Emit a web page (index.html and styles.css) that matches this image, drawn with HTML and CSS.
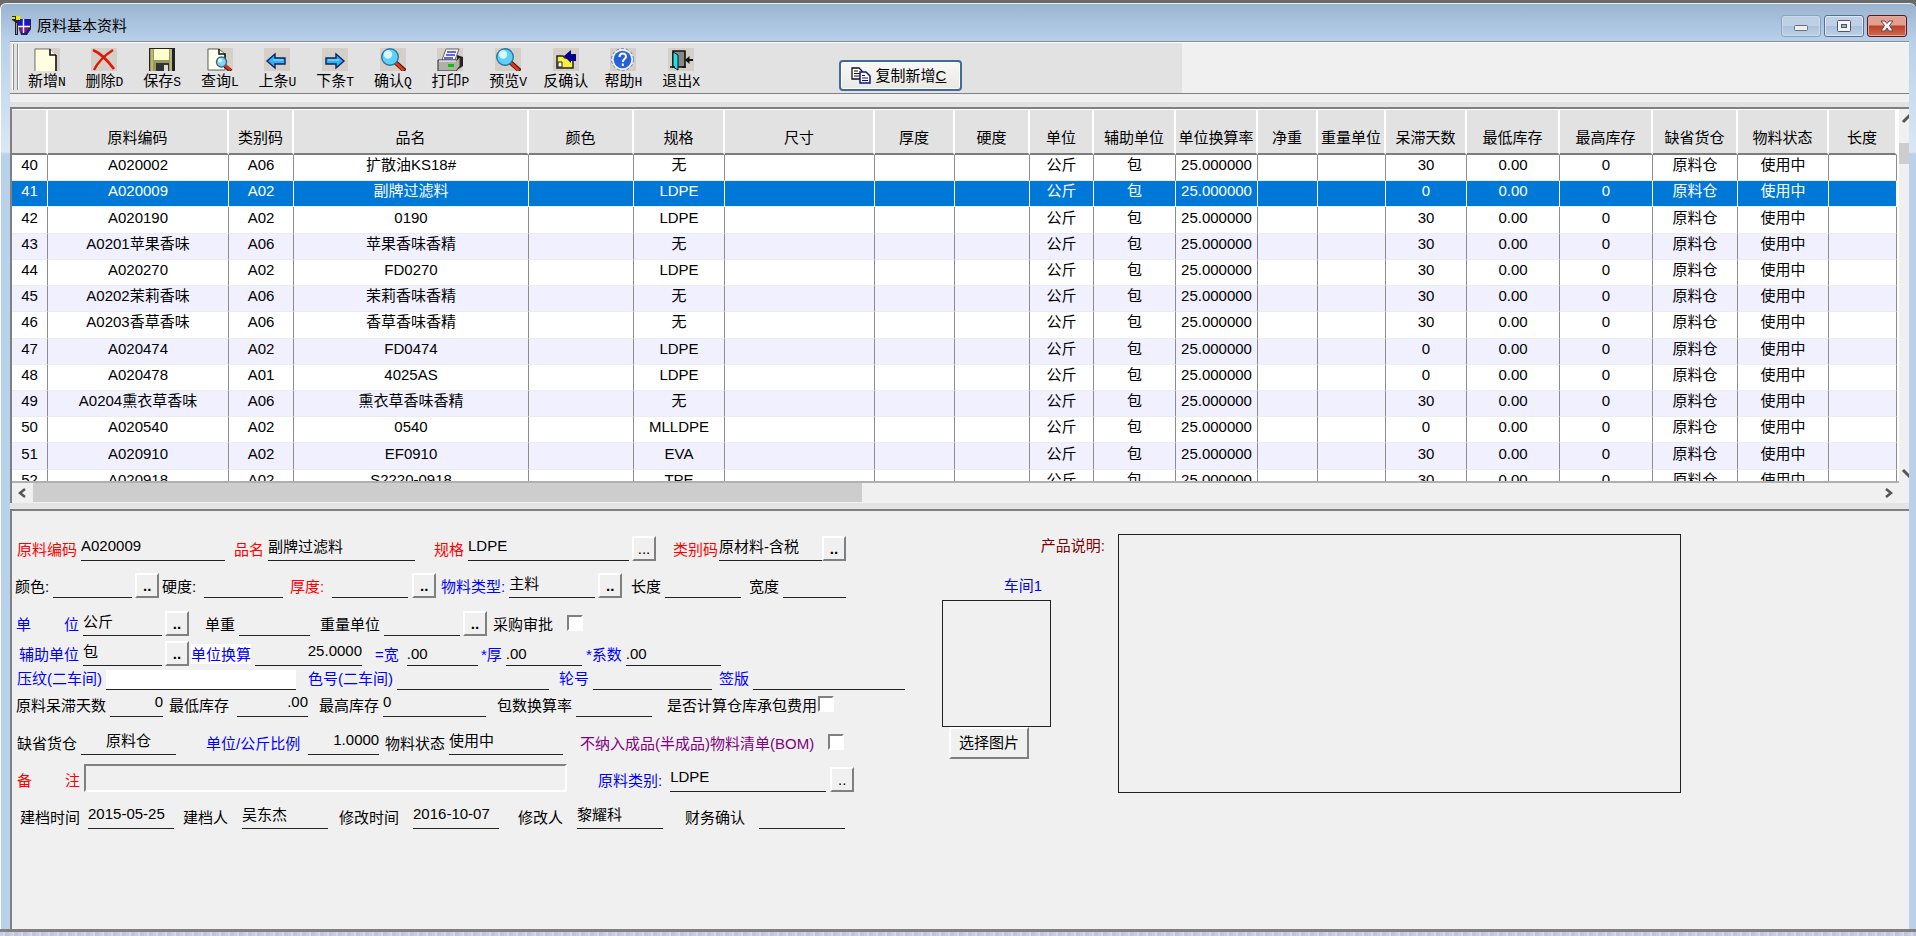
FILE: index.html
```html
<!DOCTYPE html>
<html lang="zh-CN">
<head>
<meta charset="utf-8">
<title>原料基本资料</title>
<link rel="stylesheet" href="styles.css">
</head>
<body>
<div class="window">
<header class="titlebar">
  <svg class="app-icon" viewBox="0 0 20 20" width="20" height="20"><path d="M4 3h15v10l-4 6H9z" fill="#2a1a6a"/><path d="M6 4h5v6H6zM12 4h5v6h-5z" fill="#1414e0"/><path d="M7 11h4v5H8zM12 11h5l-3 5h-2z" fill="#7a1a8a"/><path d="M11.5 3v14M6 10.500h12" stroke="#fff" stroke-width="1.400"/><path d="M0 0h8v4l-2 2v13H3V6L0 4z" fill="#222"/><path d="M0 1h3v2H0zM4 0h4v4H4z" fill="#e8e800"/><path d="M4.500 7v11" stroke="#999"/></svg>
  <h1 class="title">原料基本资料</h1>
  <div class="win-buttons">
    <button class="win-btn" aria-label="最小化"><svg viewBox="0 0 16 14" width="16" height="14"><rect x="1.500" y="6.500" width="13" height="5" rx="1" fill="#eee" stroke="#666f7a"/></svg></button>
    <button class="win-btn win-max" aria-label="最大化"><svg viewBox="0 0 16 14" width="16" height="14"><rect x="1.500" y="1.500" width="13" height="11" rx="1" fill="#f4f4f4" stroke="#4c5664"/><rect x="5.500" y="5.500" width="5" height="3" fill="#8fb0d4" stroke="#4c5664"/></svg></button>
    <button class="win-btn win-close" aria-label="关闭"><svg viewBox="0 0 16 14" width="16" height="14"><path d="M2 2h4l2 2.500L10 2h4l-3.500 4.500L14 12h-4L8 9l-2 3H2l3.500-5.500z" fill="#f4f4f4" stroke="#5a4a58"/></svg></button>
  </div>
</header>
<div class="client">
<nav class="toolbar">
  <div class="tools">
    <div class="grip"></div>
    <div class="tool-list">
      <button class="tool"><svg viewBox="0 0 26 23" width="26" height="23"><rect width="26" height="23" fill="#d4d0c8"/><path d="M1 1h15l6 6v17H1z" fill="#ffffe0" stroke="#777"/><path d="M16 1v6h6" fill="#fff" stroke="#111" stroke-width="1.600"/><path d="M22 7v16" stroke="#111" stroke-width="1.500"/></svg><span>新增<kbd>N</kbd></span></button>
      <button class="tool"><svg viewBox="0 0 26 23" width="26" height="23"><rect width="26" height="23" fill="#d4d0c8"/><path d="M2 2c7 3 15 11 21 19" fill="none" stroke="#e01808" stroke-width="2.800"/><path d="M22 2C14 7 7 14 3 22" fill="none" stroke="#e01808" stroke-width="2.400"/></svg><span>删除<kbd>D</kbd></span></button>
      <button class="tool"><svg viewBox="0 0 26 23" width="26" height="23"><path d="M0 0h26v23H0z" fill="#222"/><path d="M1 1h22v22H1z" fill="#98985c"/><path d="M5 1h15v11H5z" fill="#ffffcc"/><path d="M3 1v22M22 1v22" stroke="#d8d8a0"/><path d="M7 15h13v8H7z" fill="#333"/><path d="M15 17h4v6h-4z" fill="#ddd"/></svg><span>保存<kbd>S</kbd></span></button>
      <button class="tool"><svg viewBox="0 0 26 23" width="26" height="23"><rect width="26" height="23" fill="#d4d0c8"/><path d="M1 1h11l6 5v16H1z" fill="#fffff0" stroke="#666"/><path d="M12 1v5h6v14" fill="none" stroke="#111" stroke-width="1.500"/><circle cx="14.500" cy="14" r="5" fill="#7fd8f8" stroke="#37698c" stroke-width="1.400"/><circle cx="13" cy="12.500" r="2" fill="#e8faff"/><path d="M18 18l6 5" stroke="#222" stroke-width="4"/><path d="M18 17.500l5.500 4.500" stroke="#e83010" stroke-width="2.600"/></svg><span>查询<kbd>L</kbd></span></button>
      <button class="tool"><svg viewBox="0 0 26 23" width="26" height="23"><rect width="26" height="23" fill="#d4d0c8"/><path d="M3 13l8-7v4h10v6H11v4z" fill="#30b0f8" stroke="#102060" stroke-width="1.400"/><path d="M9 12h10" stroke="#a0e8ff"/></svg><span>上条<kbd>U</kbd></span></button>
      <button class="tool"><svg viewBox="0 0 26 23" width="26" height="23"><rect width="26" height="23" fill="#d4d0c8"/><path d="M22 13l-8-7v4H4v6h10v4z" fill="#30b0f8" stroke="#102060" stroke-width="1.400"/><path d="M6 12h11" stroke="#a0e8ff"/></svg><span>下条<kbd>T</kbd></span></button>
      <button class="tool"><svg viewBox="0 0 26 23" width="26" height="23"><rect width="26" height="23" fill="#d4d0c8"/><path d="M15 14l10 9" stroke="#222" stroke-width="4.500"/><path d="M15 14l9 8.500" stroke="#f03010" stroke-width="3"/><circle cx="10" cy="9" r="8.300" fill="#60d0f8" stroke="#2878a8" stroke-width="1.400"/><circle cx="8" cy="6.500" r="4.200" fill="#d8f8ff"/></svg><span>确认<kbd>Q</kbd></span></button>
      <button class="tool"><svg viewBox="0 0 26 23" width="26" height="23"><rect width="26" height="23" fill="#d4d0c8"/><path d="M20 7l6 2v9l-6 4z" fill="#222"/><path d="M9 1h13l-4 11H5z" fill="#f4f4ff" stroke="#666"/><path d="M10 4h9M9 7h9M7 10h9" stroke="#3038e0" stroke-width="1.500"/><path d="M1 12h19l3-3v9l-4 5H1z" fill="#b0b0a8" stroke="#333"/><path d="M2 13h17" stroke="#fff"/><path d="M11 16h6v3h-6z" fill="#10c010"/></svg><span>打印<kbd>P</kbd></span></button>
      <button class="tool"><svg viewBox="0 0 26 23" width="26" height="23"><rect width="26" height="23" fill="#d4d0c8"/><path d="M15 14l10 9" stroke="#222" stroke-width="4.500"/><path d="M15 14l9 8.500" stroke="#f03010" stroke-width="3"/><circle cx="10" cy="9" r="8.300" fill="#60d0f8" stroke="#2878a8" stroke-width="1.400"/><circle cx="8" cy="6.500" r="4.200" fill="#d8f8ff"/></svg><span>预览<kbd>V</kbd></span></button>
      <button class="tool"><svg viewBox="0 0 26 23" width="26" height="23"><rect width="26" height="23" fill="#d4d0c8"/><path d="M4 8h6l2 2h8v10H4z" fill="#f8f040" stroke="#222" stroke-width="1.500"/><path d="M5 14h4v5H5z" fill="#fff" stroke="#222"/><path d="M11 8l7-6v4h5v7h-5v2z" fill="#000090"/></svg><span>反确认</span></button>
      <button class="tool"><svg viewBox="0 0 26 23" width="26" height="23"><rect width="26" height="23" fill="#d4d0c8"/><circle cx="12.500" cy="11.500" r="11" fill="#e8eefc" stroke="#7078b0" stroke-dasharray="3 2"/><circle cx="12.500" cy="11.500" r="8.800" fill="#2860d8"/><path d="M9.500 9c0-4.500 6.500-4.500 6.500-.5 0 2.500-3.200 2.500-3.200 5.500M12.800 15.500v2.500" fill="none" stroke="#fff" stroke-width="2"/></svg><span>帮助<kbd>H</kbd></span></button>
      <button class="tool"><svg viewBox="0 0 26 23" width="26" height="23"><rect width="26" height="23" fill="#d4d0c8"/><path d="M5 3h12v16H5z" fill="#888" stroke="#111" stroke-width="1.600"/><path d="M5 4l5 3v15l-5-3z" fill="#20e0e8" stroke="#111"/><path d="M2 19h5M14 19h4" stroke="#111" stroke-width="1.400"/><path d="M25 12h-6" stroke="#111" stroke-width="2"/><path d="M17 12l4.500-4v8z" fill="#111"/></svg><span>退出<kbd>X</kbd></span></button>
    </div>
    <button class="copy-btn"><svg viewBox="0 0 20 17" width="20" height="17"><path d="M1 1h7l3 3v8H1z" fill="#fff" stroke="#111" stroke-width="1.300"/><path d="M3 4h4M3 6.500h6M3 9h6" stroke="#111"/><path d="M9 5h6l4 4v7H9z" fill="#fff" stroke="#10108c" stroke-width="1.500"/><path d="M11 8.500h3M11 11h6M11 13.500h6" stroke="#10108c"/></svg><span>复制新增<u>C</u></span></button>
  </div>
</nav>
<div class="strip"></div>
<section class="grid-panel">
<div class="grid-view">
<table class="grid">
<colgroup><col class="c-num"><col class="c-code"><col class="c-class"><col class="c-name"><col class="c-color"><col class="c-spec"><col class="c-size"><col class="c-thick"><col class="c-hard"><col class="c-unit"><col class="c-aux"><col class="c-rate"><col class="c-net"><col class="c-wunit"><col class="c-days"><col class="c-min"><col class="c-max"><col class="c-store"><col class="c-state"><col class="c-len"></colgroup>
<thead><tr><th></th><th>原料编码</th><th>类别码</th><th>品名</th><th>颜色</th><th>规格</th><th>尺寸</th><th>厚度</th><th>硬度</th><th>单位</th><th>辅助单位</th><th>单位换算率</th><th>净重</th><th>重量单位</th><th>呆滞天数</th><th>最低库存</th><th>最高库存</th><th>缺省货仓</th><th>物料状态</th><th>长度</th></tr></thead>
<tbody>
<tr><td>40</td><td>A020002</td><td>A06</td><td>扩散油KS18#</td><td></td><td>无</td><td></td><td></td><td></td><td>公斤</td><td>包</td><td>25.000000</td><td></td><td></td><td>30</td><td>0.00</td><td>0</td><td>原料仓</td><td>使用中</td><td></td></tr>
<tr class="selected"><td>41</td><td>A020009</td><td>A02</td><td>副牌过滤料</td><td></td><td>LDPE</td><td></td><td></td><td></td><td>公斤</td><td>包</td><td>25.000000</td><td></td><td></td><td>0</td><td>0.00</td><td>0</td><td>原料仓</td><td>使用中</td><td></td></tr>
<tr><td>42</td><td>A020190</td><td>A02</td><td>0190</td><td></td><td>LDPE</td><td></td><td></td><td></td><td>公斤</td><td>包</td><td>25.000000</td><td></td><td></td><td>30</td><td>0.00</td><td>0</td><td>原料仓</td><td>使用中</td><td></td></tr>
<tr><td>43</td><td>A0201苹果香味</td><td>A06</td><td>苹果香味香精</td><td></td><td>无</td><td></td><td></td><td></td><td>公斤</td><td>包</td><td>25.000000</td><td></td><td></td><td>30</td><td>0.00</td><td>0</td><td>原料仓</td><td>使用中</td><td></td></tr>
<tr><td>44</td><td>A020270</td><td>A02</td><td>FD0270</td><td></td><td>LDPE</td><td></td><td></td><td></td><td>公斤</td><td>包</td><td>25.000000</td><td></td><td></td><td>30</td><td>0.00</td><td>0</td><td>原料仓</td><td>使用中</td><td></td></tr>
<tr><td>45</td><td>A0202茉莉香味</td><td>A06</td><td>茉莉香味香精</td><td></td><td>无</td><td></td><td></td><td></td><td>公斤</td><td>包</td><td>25.000000</td><td></td><td></td><td>30</td><td>0.00</td><td>0</td><td>原料仓</td><td>使用中</td><td></td></tr>
<tr><td>46</td><td>A0203香草香味</td><td>A06</td><td>香草香味香精</td><td></td><td>无</td><td></td><td></td><td></td><td>公斤</td><td>包</td><td>25.000000</td><td></td><td></td><td>30</td><td>0.00</td><td>0</td><td>原料仓</td><td>使用中</td><td></td></tr>
<tr><td>47</td><td>A020474</td><td>A02</td><td>FD0474</td><td></td><td>LDPE</td><td></td><td></td><td></td><td>公斤</td><td>包</td><td>25.000000</td><td></td><td></td><td>0</td><td>0.00</td><td>0</td><td>原料仓</td><td>使用中</td><td></td></tr>
<tr><td>48</td><td>A020478</td><td>A01</td><td>4025AS</td><td></td><td>LDPE</td><td></td><td></td><td></td><td>公斤</td><td>包</td><td>25.000000</td><td></td><td></td><td>0</td><td>0.00</td><td>0</td><td>原料仓</td><td>使用中</td><td></td></tr>
<tr><td>49</td><td>A0204熏衣草香味</td><td>A06</td><td>熏衣草香味香精</td><td></td><td>无</td><td></td><td></td><td></td><td>公斤</td><td>包</td><td>25.000000</td><td></td><td></td><td>30</td><td>0.00</td><td>0</td><td>原料仓</td><td>使用中</td><td></td></tr>
<tr><td>50</td><td>A020540</td><td>A02</td><td>0540</td><td></td><td>MLLDPE</td><td></td><td></td><td></td><td>公斤</td><td>包</td><td>25.000000</td><td></td><td></td><td>0</td><td>0.00</td><td>0</td><td>原料仓</td><td>使用中</td><td></td></tr>
<tr><td>51</td><td>A020910</td><td>A02</td><td>EF0910</td><td></td><td>EVA</td><td></td><td></td><td></td><td>公斤</td><td>包</td><td>25.000000</td><td></td><td></td><td>30</td><td>0.00</td><td>0</td><td>原料仓</td><td>使用中</td><td></td></tr>
<tr><td>52</td><td>A020918</td><td>A02</td><td>S2220-0918</td><td></td><td>TPE</td><td></td><td></td><td></td><td>公斤</td><td>包</td><td>25.000000</td><td></td><td></td><td>30</td><td>0.00</td><td>0</td><td>原料仓</td><td>使用中</td><td></td></tr>
</tbody>
</table>
</div>
<div class="vscroll">
  <svg viewBox="0 0 20 20" width="20" height="20"><path d="M4 13l6-6 6 6" fill="none" stroke="#555" stroke-width="3"/></svg>
  <div class="vthumb"></div>
  <svg class="down" viewBox="0 0 20 20" width="20" height="20"><path d="M4 7l6 6 6-6" fill="none" stroke="#555" stroke-width="3"/></svg>
</div>
<div class="hscroll">
  <svg viewBox="0 0 21 20" width="21" height="20"><path d="M13 6l-5 4 5 4" fill="none" stroke="#555" stroke-width="2.500"/></svg>
  <div class="htrack"><div class="hthumb"></div></div>
  <svg viewBox="0 0 21 20" width="21" height="20"><path d="M8 6l5 4-5 4" fill="none" stroke="#555" stroke-width="2.500"/></svg>
</div>
</section>
<main class="detail">
<form class="form">
  <div class="row r1">
    <div class="group"><label class="red" for="code">原料编码</label><input id="code" class="w144" value="A020009"></div>
    <div class="group"><label class="red" for="name">品名</label><input id="name" class="w147" value="副牌过滤料"></div>
    <div class="group"><label class="red" for="spec">规格</label><input id="spec" class="w161" value="LDPE"><button type="button" class="pick thin">...</button></div>
    <div class="group tight"><label class="red" for="cls">类别码</label><input id="cls" class="w103" value="原材料-含税"><button type="button" class="pick">..</button></div>
  </div>
  <div class="row r2">
    <div class="group"><label for="color">颜色:</label><input id="color" class="w79"><button type="button" class="pick">..</button></div>
    <div class="group wide"><label for="hard">硬度:</label><input id="hard" class="w79"></div>
    <div class="group wide"><label class="red" for="thick">厚度:</label><input id="thick" class="w76"><button type="button" class="pick">..</button></div>
    <div class="group"><label class="blue" for="mtype">物料类型:</label><input id="mtype" class="w86" value="主料"><button type="button" class="pick">..</button></div>
    <div class="group"><label for="len">长度</label><input id="len" class="w76"></div>
    <div class="group"><label for="wid">宽度</label><input id="wid" class="w63"></div>
  </div>
  <div class="row r3">
    <div class="group"><label class="blue spread" for="unit"><span>单</span><span>位</span></label><input id="unit" class="w79" value="公斤"><button type="button" class="pick">..</button></div>
    <div class="group"><label for="weight">单重</label><input id="weight" class="w71"></div>
    <div class="group"><label for="wunit">重量单位</label><input id="wunit" class="w76"><button type="button" class="pick">..</button></div>
    <div class="group apart"><label for="audit">采购审批</label><input type="checkbox" id="audit"></div>
  </div>
  <div class="row r4">
    <div class="group"><label class="blue" for="aux">辅助单位</label><input id="aux" class="w79" value="包"><button type="button" class="pick">..</button></div>
    <div class="group"><label class="blue lit" for="conv">单位换算</label><input id="conv" class="w107 num" value="25.0000"></div>
    <div class="group wide"><label class="blue" for="cw">=宽</label><input id="cw" class="w71 low" value=".00"></div>
    <div class="group"><label class="blue" for="ct">*厚</label><input id="ct" class="w76 low" value=".00"></div>
    <div class="group"><label class="blue" for="ck">*系数</label><input id="ck" class="w95 low" value=".00"></div>
  </div>
  <div class="row r5">
    <div class="group"><label class="blue" for="emb">压纹(二车间)</label><input id="emb" class="w190 white"></div>
    <div class="group"><label class="blue" for="cno">色号(二车间)</label><input id="cno" class="w152"></div>
    <div class="group"><label class="blue" for="wheel">轮号</label><input id="wheel" class="w119"></div>
    <div class="group"><label class="blue" for="sign">签版</label><input id="sign" class="w152"></div>
  </div>
  <div class="row r6">
    <div class="group"><label for="days">原料呆滞天数</label><input id="days" class="w53 num" value="0"></div>
    <div class="group wide"><label for="min">最低库存</label><input id="min" class="w71 num" value=".00"></div>
    <div class="group"><label for="max">最高库存</label><input id="max" class="w103" value="0"></div>
    <div class="group"><label for="packs">包数换算率</label><input id="packs" class="w76"></div>
    <div class="group tight"><label for="fee">是否计算仓库承包费用</label><input type="checkbox" id="fee"></div>
  </div>
  <div class="row r7">
    <div class="group"><label for="store">缺省货仓</label><input id="store" class="w95 mid" value="原料仓"></div>
    <div class="group wide"><label class="blue" for="ratio">单位/公斤比例</label><input id="ratio" class="w71 num" value="1.0000"></div>
    <div class="group"><label for="state">物料状态</label><input id="state" class="w114" value="使用中"></div>
    <div class="group apart"><label class="purple" for="bom">不纳入成品(半成品)物料清单(BOM)</label><input type="checkbox" id="bom"></div>
  </div>
  <div class="row r8">
    <div class="group"><label class="red spread" for="note"><span>备</span><span>注</span></label><input id="note" class="sunken"></div>
    <div class="group wide"><label class="blue" for="mcls">原料类别:</label><input id="mcls" class="w156" value="LDPE"><button type="button" class="pick thin">..</button></div>
  </div>
  <div class="row r9">
    <div class="group wide"><label for="ctime">建档时间</label><input id="ctime" class="w86" value="2015-05-25"></div>
    <div class="group apart"><label for="cby">建档人</label><input id="cby" class="w86" value="吴东杰"></div>
    <div class="group apart"><label for="mtime">修改时间</label><input id="mtime" class="w86" value="2016-10-07"></div>
    <div class="group apart"><label for="mby">修改人</label><input id="mby" class="w86" value="黎耀科"></div>
    <div class="group apart"><label for="fin">财务确认</label><input id="fin" class="w86"></div>
  </div>
</form>
<div class="side">
  <label class="desc-label" for="desc">产品说明:</label>
  <div class="photo"><span class="photo-label">车间1</span><div class="photo-box"></div><button type="button" class="photo-btn">选择图片</button></div>
  <textarea id="desc"></textarea>
</div>
</main>
</div>
</div>
<footer class="backdrop"></footer>
</body>
</html>
```
FILE: styles.css
```css
* { box-sizing: border-box; }
html, body { height: 100%; }
body {
  margin: 0;
  display: flex;
  flex-direction: column;
  overflow: hidden;
  background: #696969;
  color: #000;
  font: 15px/20px "Liberation Sans", "Noto Sans CJK SC", sans-serif;
}
button, input, textarea { font: inherit; color: inherit; margin: 0; border-radius: 0; }
button { padding: 0; }
svg { display: block; flex: none; }

.window {
  flex: 1;
  min-height: 0;
  display: flex;
  flex-direction: column;
  margin-top: 3px;
  padding: 0 7px 0 9px;
  border-top: 1px solid #e8f0f8;
  border-left: 1px solid #fff;
  border-radius: 6px 6px 0 0;
  background: linear-gradient(#9ab4d1 0, #b9d1ea 38px, #dbe7f5 148px, #b9d1ea 150px);
}
.titlebar { height: 37px; display: flex; align-items: center; padding: 7px 2px 0 2px; gap: 5px; flex: none; }
.title { margin: 0; font-size: 15px; font-weight: 400; line-height: 20px; }
.win-buttons { margin-left: auto; display: flex; gap: 3px; }
.win-btn {
  width: 40px; height: 22px;
  display: flex; align-items: center; justify-content: center;
  border: 1px solid #8ba3bf; border-radius: 3px;
  background: linear-gradient(#bdd0e5 50%, #a9c0da 50%, #bcd3ec);
  box-shadow: inset 0 0 0 1px #c9d9ea;
}
.win-max { border-color: #5a6f8c; box-shadow: inset 0 0 0 1px #dce8f5; }
.win-close { border-color: #5c1620; background: linear-gradient(#e2a090 45%, #bd4028 50%, #cf6a50); box-shadow: inset 0 0 0 1px #e6aa9c; }

.client { flex: 1; min-height: 0; display: flex; flex-direction: column; background: #f0f0f0; border-top: 1px solid #848c94; }
.toolbar { flex: none; height: 52px; border-top: 1px solid #fff; border-bottom: 1px solid #808080; }
.tools { width: 1172px; height: 50px; display: flex; background: #e2e2e2; }
.grip { width: 5px; margin: 1px 0 3px 3px; border: solid #8c8c8c; border-width: 0 1px; box-shadow: 1px 0 #fff, -1px 0 #fff; }
.tool-list { width: 692px; display: grid; grid-template-columns: repeat(12, 1fr); }
.tool { display: flex; flex-direction: column; align-items: center; padding-top: 5px; border: 0; background: none; line-height: 20px; white-space: nowrap; }
.tool kbd { font: 13px "Liberation Mono", monospace; }
.copy-btn {
  width: 123px; height: 31px; margin: 17px 0 0 129px;
  display: flex; align-items: center; justify-content: center; gap: 5px;
  padding-right: 4px;
  border: 2px solid #41699c; border-radius: 4px;
  background: linear-gradient(#f8f8f6, #e8e8e4);
  box-shadow: inset 0 0 0 1px #fff;
}
.strip { flex: none; height: 13px; background: linear-gradient(#f0f0f0 8px, #e2e2e2 8px); }

.grid-panel {
  flex: none;
  display: grid;
  grid-template-columns: minmax(0, 1fr) 10px;
  grid-template-rows: 374px 20px;
  border-top: 2px solid #808080;
  border-left: 2px solid #808080;
}
.grid-view { overflow: hidden; background: #fff; border-bottom: 2px solid #b0b0b0; }
.grid { width: 1885px; height: 387px; table-layout: fixed; border-collapse: separate; border-spacing: 0; }
.c-num { width: 36px; } .c-code { width: 181px; } .c-class { width: 65px; } .c-name { width: 235px; }
.c-color { width: 105px; } .c-spec { width: 91px; } .c-size { width: 150px; } .c-thick { width: 80px; }
.c-hard { width: 75px; } .c-unit { width: 64px; } .c-aux { width: 82px; } .c-rate { width: 82px; }
.c-net { width: 60px; } .c-wunit { width: 68px; } .c-days { width: 81px; } .c-min { width: 93px; }
.c-max { width: 93px; } .c-store { width: 85px; } .c-state { width: 91px; } .c-len { width: 68px; }
.grid th {
  height: 46px; padding: 13px 0 0; font-weight: 400; white-space: nowrap;
  background: #e2e2e2; border-right: 2px solid #fff; border-top: 1px solid #fff; border-bottom: 2px solid #7c7c7c;
}
.grid td {
  padding: 0 0 5px; text-align: center; white-space: nowrap; line-height: 20px;
  border-right: 1px solid #8c8c8c; border-bottom: 1px solid #ececec;
}
.grid tbody tr:nth-child(even) td { background: #f0f0ff; }
.grid tbody tr.selected td { background: #0078d7; color: #fff; border-right-color: #fff; }
.vscroll { overflow: hidden; display: flex; flex-direction: column; }
.vthumb { width: 20px; height: 21px; margin-top: 14px; background: #cdcdcd; }
.down { margin-top: auto; }
.hscroll { grid-column: 1 / -1; display: flex; padding-right: 10px; }
.htrack { flex: 1; }
.hthumb { width: 829px; height: 19px; background: #cdcdcd; }

.detail {
  flex: 1; min-height: 0; margin-top: 6px;
  display: flex; align-items: flex-start; gap: 35px;
  padding-top: 23px;
  border-top: 2px solid #808080; border-left: 2px solid #808080;
  box-shadow: 0 -6px #e4e4e4;
}
.form {
  flex: none;
  display: grid;
  grid-template-columns: 895px;
  grid-template-rows: 27px 37px 38px 30px 24px 27px 38px 37px 37px;
  align-items: end;
}
.row { display: grid; align-items: end; }
.r1 { grid-template-columns: 217px 200px 239px 1fr; padding-left: 5px; }
.r2 { grid-template-columns: 147px 128px 151px 190px 118px 1fr; padding-left: 3px; }
.r3 { grid-template-columns: 189px 115px 173px 1fr; padding-left: 4px; }
.r4 { grid-template-columns: 172px 184px 106px 105px 1fr; padding-left: 7px; }
.r5 { grid-template-columns: 291px 251px 160px 1fr; padding-left: 5px; }
.r6 { grid-template-columns: 153px 150px 178px 170px 1fr; padding-left: 4px; }
.r7 { grid-template-columns: 189px 179px 195px 1fr; padding-left: 5px; }
.r8 { grid-template-columns: 581px 1fr; padding-left: 5px; }
.r9 { grid-template-columns: 163px 156px 179px 167px 1fr; padding-left: 8px; }
.group { display: flex; align-items: flex-end; gap: 4px; }
.group.tight { gap: 1px; }
.group.wide { gap: 8px; }
.group.apart { gap: 14px; }
.group .pick { margin-left: -1px; }
.group.wide .pick { margin-left: -4px; }
.group label { line-height: 22px; white-space: nowrap; }
.spread { width: 63px; display: flex; justify-content: space-between; }
.red { color: #f00; }
.blue { color: #00f; }
.purple { color: #800080; }
.lit { background: linear-gradient(#fff 20px, transparent 20px); }
.form input:not([type="checkbox"]) {
  height: 25px; padding: 0 0 5px; border: 0; border-bottom: 1px solid #222; background: none; outline: 0;
}
.form input.low { padding-bottom: 0; }
.form input.white { height: 20px; background: #fff; }
.form input.sunken { width: 483px; height: 28px; border: 2px solid; border-color: #808080 #fff #fff #808080; }
.form .num { text-align: right; }
.form .mid { text-align: center; }
.form input[type="checkbox"] {
  appearance: none; width: 16px; height: 16px; margin-bottom: 5px;
  border: 2px solid; border-color: #808080 #fff #fff #808080; background: #fff;
}
.w53 { width: 53px; } .w63 { width: 63px; } .w71 { width: 71px; } .w76 { width: 76px; }
.w79 { width: 79px; } .w86 { width: 86px; } .w95 { width: 95px; } .w103 { width: 103px; }
.w107 { width: 107px; } .w114 { width: 114px; } .w119 { width: 119px; } .w144 { width: 144px; }
.w147 { width: 147px; } .w152 { width: 152px; } .w156 { width: 156px; } .w161 { width: 161px; } .w190 { width: 190px; }
.pick, .photo-btn { border: 2px solid; border-color: #fff #808080 #808080 #fff; background: #f0f0f0; }
.pick { width: 24px; height: 25px; line-height: 20px; font-weight: 700; }
.pick.thin { font-weight: 400; }

.side {
  flex: 1; min-width: 0;
  display: grid;
  grid-template-columns: 109px 67px minmax(0, 563px);
  grid-template-rows: 42px 1fr;
}
.desc-label { grid-column: 1 / 3; padding: 2px 13px 0 0; text-align: right; color: #800000; }
.photo { grid-row: 2; grid-column: 1; display: flex; flex-direction: column; }
.photo-label { padding-right: 9px; text-align: right; color: #00f; }
.photo-box { height: 127px; margin-top: 4px; border: 1px solid #222; }
.photo-btn { width: 80px; height: 32px; margin-left: 7px; }
.side textarea { grid-column: 3; grid-row: 1 / 3; width: 100%; height: 259px; border: 1px solid #222; background: none; resize: none; outline: 0; }

.backdrop { flex: none; height: 7px; border-top: 3px solid #808080; background: repeating-linear-gradient(90deg, #c8cce4 0 3px, #d8d4ec 3px 5px, #c0c4dc 5px 9px); }
```
